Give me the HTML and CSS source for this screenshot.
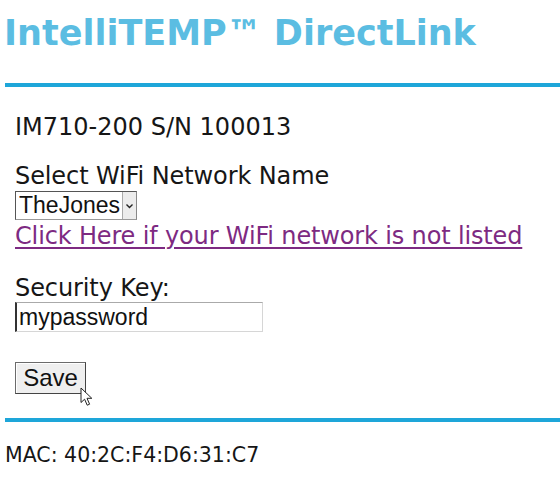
FILE: index.html
```
<!DOCTYPE html>
<html>
<head>
<meta charset="utf-8">
<link rel="stylesheet" href="styles.css">
</head>
<body>
<h1 class="title">IntelliTEMP™ DirectLink</h1>
<div class="rule"></div>
<div class="content">
  <p class="device">IM710-200 S/N 100013</p>
  <div class="field">
    <label class="label" for="ssid">Select WiFi Network Name</label>
    <span class="select-box">
      <select id="ssid" class="select"><option>TheJones</option></select>
      <span class="select-arrow"><svg width="9" height="6" viewBox="0 0 9 6"><path d="M1.5 1.5 L4.5 4.5 L7.5 1.5" fill="none" stroke="#222" stroke-width="1.4"/></svg></span>
    </span>
    <a class="link" href="#">Click Here if your WiFi network is not listed</a>
  </div>
  <div class="field key">
    <label class="label" for="key">Security Key:</label>
    <input id="key" class="input" type="text" value="mypassword">
  </div>
  <div class="actions">
    <button class="save" type="button">Save</button>
    <svg class="cursor" width="14" height="20" viewBox="0 0 14 20"><path d="M1 1 L1 15.5 L4.6 12.2 L7.2 18.2 L9.6 17.2 L7 11.3 L11.8 11.3 Z" fill="#fff" stroke="#222" stroke-width="1" stroke-linejoin="round"/></svg>
  </div>
</div>
<div class="rule rule-bottom"></div>
<p class="mac">MAC: 40:2C:F4:D6:31:C7</p>
</body>
</html>
```
FILE: styles.css
```
html, body {
  margin: 0;
  padding: 0;
  background: #fff;
}
body {
  font-family: "DejaVu Sans", Verdana, sans-serif;
  color: #161616;
  width: 560px;
  overflow: hidden;
}
.title {
  margin: 13px 0 0 0;
  padding-left: 4px;
  font-size: 35px;
  line-height: 41px;
  font-weight: bold;
  color: #5bbde2;
}
.rule {
  margin: 29px 0 0 5px;
  height: 4px;
  background: #1ea6d9;
}
.content {
  padding-left: 15px;
}
.device {
  margin: 26px 0 0 0;
  font-size: 24px;
  line-height: 28px;
}
.field {
  display: flex;
  flex-direction: column;
  align-items: flex-start;
  margin-top: 21px;
}
.field.key {
  margin-top: 24px;
}
.label {
  font-size: 24px;
  line-height: 28px;
  letter-spacing: -0.1px;
}
.select-box {
  display: inline-flex;
  margin-top: 1px;
  height: 29px;
  box-sizing: border-box;
  border: 1px solid #555;
  border-right-color: #888;
  border-bottom-color: #999;
  background: #fff;
}
.select {
  appearance: none;
  -webkit-appearance: none;
  border: none;
  outline: none;
  background: #fff;
  font-family: "Liberation Sans", Arial, sans-serif;
  font-size: 23px;
  line-height: 27px;
  height: 27px;
  padding: 0 0 0 3px;
  margin: 0;
  width: 106px;
  color: #111;
  text-overflow: clip;
}
.select-arrow {
  width: 14px;
  box-sizing: border-box;
  border-left: 1px solid #aaa;
  background: #ececec;
  display: flex;
  align-items: center;
  justify-content: center;
}
.link {
  margin-top: 2px;
  font-size: 24px;
  line-height: 28px;
  letter-spacing: -0.15px;
  color: #7d2a82;
  text-decoration: underline;
  text-underline-offset: 3px;
  text-decoration-thickness: 2px;
}
.input {
  width: 248px;
  height: 30px;
  box-sizing: border-box;
  margin: 0;
  padding: 0 0 0 2px;
  border: 1px solid #d6d6d6;
  border-top-color: #aaa;
  border-left: 2px solid #333;
  font-family: "Liberation Sans", Arial, sans-serif;
  font-size: 23px;
  color: #111;
  outline: none;
}
.actions {
  position: relative;
  margin-top: 30px;
  height: 32px;
}
.save {
  width: 71px;
  height: 32px;
  margin: 0;
  padding: 0;
  box-sizing: border-box;
  border: 1px solid #6b6b6b;
  border-right-color: #444;
  border-bottom-color: #444;
  box-shadow: inset 1px 1px 0 #fff;
  background: #efefef;
  font-family: "Liberation Sans", Arial, sans-serif;
  font-size: 24px;
  color: #111;
}
.cursor {
  position: absolute;
  left: 65px;
  top: 25px;
}
.rule-bottom {
  margin-top: 24px;
}
.mac {
  margin: 21px 0 0 0;
  padding-left: 5px;
  font-size: 20.5px;
  line-height: 24px;
}
```
